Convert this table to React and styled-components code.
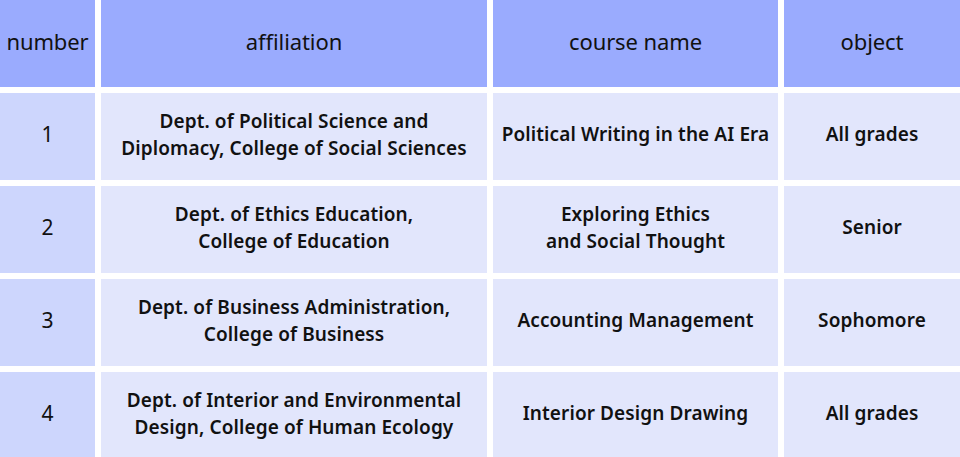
import React from 'react';
import styled, { createGlobalStyle } from 'styled-components';

const GlobalStyle = createGlobalStyle`
  html, body {
    margin: 0;
    padding: 0;
    background: #ffffff;
  }
  body {
    font-family: "Noto Sans", "Open Sans", sans-serif;
    color: #111111;
  }
`;

const Table = styled.div`
  display: grid;
  grid-template-columns: 95px 386px 285px 176px;
  grid-auto-rows: 87px;
  column-gap: 6px;
  row-gap: 6px;
  width: 960px;
  height: 457px;
  overflow: hidden;
`;

const Cell = styled.div`
  display: flex;
  align-items: center;
  justify-content: center;
  text-align: center;
  padding-bottom: 4px;
  box-sizing: border-box;
  background: ${(p) => (p.$head ? '#9aabfe' : p.$num ? '#cdd6fd' : '#e2e6fc')};
  font-size: ${(p) => (p.$head ? '22px' : p.$num ? '21px' : '19px')};
  font-weight: ${(p) => (p.$head || p.$num ? 400 : 600)};
  line-height: 27px;
  letter-spacing: ${(p) => (p.$head ? '-0.1px' : '0.1px')};
`;

const headers = ['number', 'affiliation', 'course name', 'object'];

const rows = [
  {
    n: '1',
    aff: ['Dept. of Political Science and', 'Diplomacy, College of Social Sciences'],
    course: ['Political Writing in the AI Era'],
    obj: 'All grades',
  },
  {
    n: '2',
    aff: ['Dept. of Ethics Education,', 'College of Education'],
    course: ['Exploring Ethics', 'and Social Thought'],
    obj: 'Senior',
  },
  {
    n: '3',
    aff: ['Dept. of Business Administration,', 'College of Business'],
    course: ['Accounting Management'],
    obj: 'Sophomore',
  },
  {
    n: '4',
    aff: ['Dept. of Interior and Environmental', 'Design, College of Human Ecology'],
    course: ['Interior Design Drawing'],
    obj: 'All grades',
  },
];

const Lines = ({ items }) => (
  <div>
    {items.map((t, i) => (
      <div key={i}>{t}</div>
    ))}
  </div>
);

const App = () => {
  return (
    <>
      <GlobalStyle />
      <Table>
        {headers.map((h) => (
          <Cell key={h} $head>
            {h}
          </Cell>
        ))}
        {rows.map((r) => (
          <React.Fragment key={r.n}>
            <Cell $num>{r.n}</Cell>
            <Cell>
              <Lines items={r.aff} />
            </Cell>
            <Cell>
              <Lines items={r.course} />
            </Cell>
            <Cell>{r.obj}</Cell>
          </React.Fragment>
        ))}
      </Table>
    </>
  );
};

export default App;
